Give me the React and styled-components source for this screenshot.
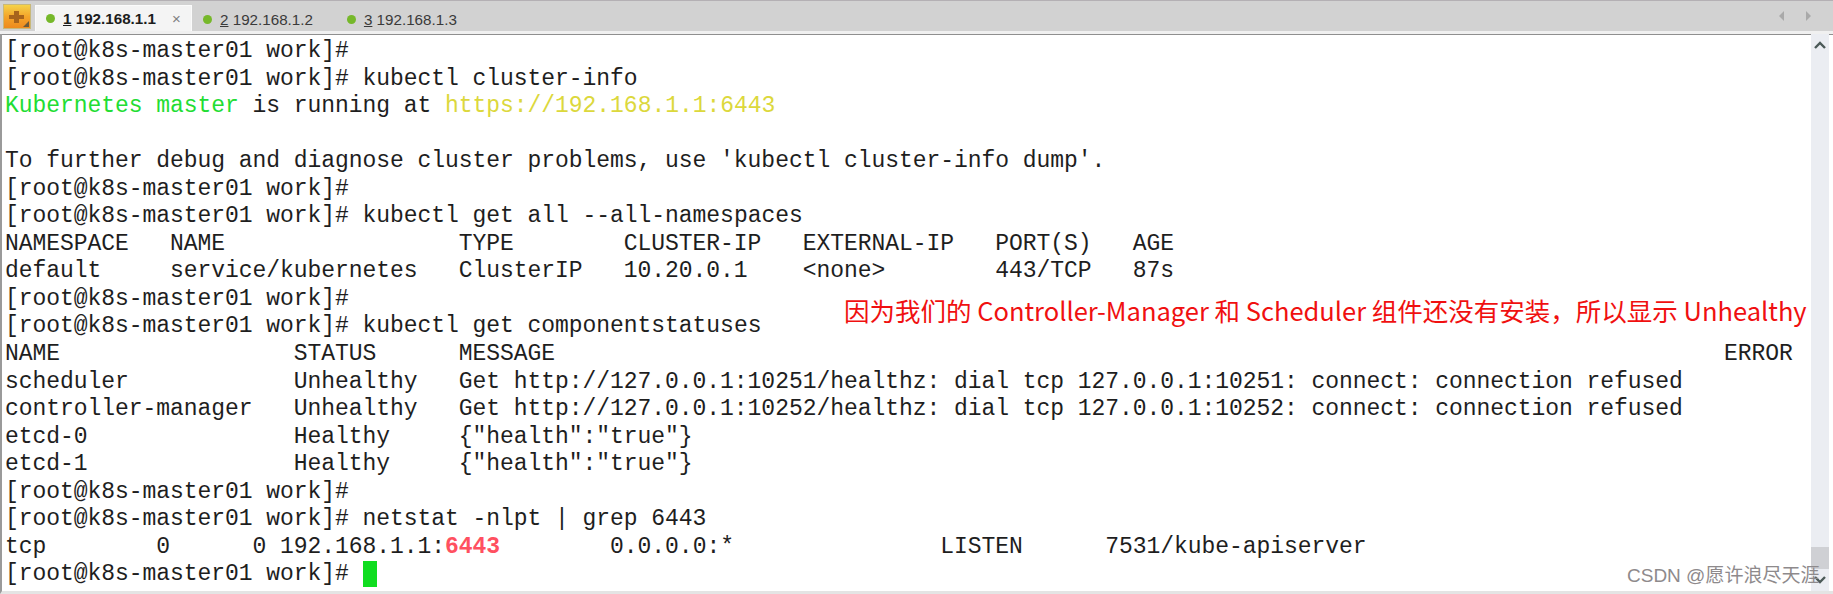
import styled, { createGlobalStyle } from 'styled-components';

const GlobalStyle = createGlobalStyle`
  html, body {
    margin: 0;
    padding: 0;
    background: #fff;
  }
`;

const tabs = [
	{num: '1', label: '192.168.1.1', active: true},
	{num: '2', label: '192.168.1.2'},
	{num: '3', label: '192.168.1.3'}
];

const PROMPT = '[root@k8s-master01 work]#';

const App = () => (
	<Window>
		<GlobalStyle/>
		<TabBar>
			<AddButton>
				<svg width="28" height="25" viewBox="0 0 28 25">
					<path d="M11 7h5v4h5v4h-5v4h-5v-4H6v-4h5z" fill="#a8641c"/>
					<path d="M20 23l6-6v6z" fill="#6b5a3a"/>
				</svg>
			</AddButton>
			{tabs.map(tab => (
				<Tab key={tab.num} $active={tab.active}>
					<Dot/>
					<TabLabel $active={tab.active}><u>{tab.num}</u> {tab.label}</TabLabel>
					{tab.active && <Close>×</Close>}
				</Tab>
			))}
			<Arrows>
				<svg width="40" height="12" viewBox="0 0 40 12">
					<path d="M5 1v10L0 6z" fill="#a9a9a9"/>
					<path d="M27 1v10l5-5z" fill="#a9a9a9"/>
				</svg>
			</Arrows>
		</TabBar>
		<Terminal>
			<Screen>
				<Line>{PROMPT}</Line>
				<Line>{PROMPT} kubectl cluster-info</Line>
				<Line><Green>Kubernetes master</Green> is running at <Yellow>https://192.168.1.1:6443</Yellow></Line>
				<Line> </Line>
				<Line>To further debug and diagnose cluster problems, use 'kubectl cluster-info dump'.</Line>
				<Line>{PROMPT}</Line>
				<Line>{PROMPT} kubectl get all --all-namespaces</Line>
				<Line>NAMESPACE   NAME                 TYPE        CLUSTER-IP   EXTERNAL-IP   PORT(S)   AGE</Line>
				<Line>default     service/kubernetes   ClusterIP   10.20.0.1    &lt;none&gt;        443/TCP   87s</Line>
				<Line>{PROMPT}</Line>
				<Line>{PROMPT} kubectl get componentstatuses</Line>
				<Line>{'NAME                 STATUS      MESSAGE'.padEnd(125)}ERROR</Line>
				<Line>scheduler            Unhealthy   Get http://127.0.0.1:10251/healthz: dial tcp 127.0.0.1:10251: connect: connection refused</Line>
				<Line>controller-manager   Unhealthy   Get http://127.0.0.1:10252/healthz: dial tcp 127.0.0.1:10252: connect: connection refused</Line>
				<Line>etcd-0               Healthy     {'{"health":"true"}'}</Line>
				<Line>etcd-1               Healthy     {'{"health":"true"}'}</Line>
				<Line>{PROMPT}</Line>
				<Line>{PROMPT} netstat -nlpt | grep 6443</Line>
				<Line>tcp        0      0 192.168.1.1:<Red>6443</Red>        0.0.0.0:*               LISTEN      7531/kube-apiserver</Line>
				<Line>{PROMPT} <Cursor/></Line>
			</Screen>
			<Scrollbar>
				<svg width="18" height="14" viewBox="0 0 18 14">
					<path d="M4 10l5-5 5 5" fill="none" stroke="#4c5a58" strokeWidth="2.4"/>
				</svg>
				<Thumb/>
				<svg width="18" height="14" viewBox="0 0 18 14">
					<path d="M4 4l5 5 5-5" fill="none" stroke="#4c5a58" strokeWidth="2.4"/>
				</svg>
			</Scrollbar>
			<Note>因为我们的 Controller-Manager 和 Scheduler 组件还没有安装，所以显示 Unhealthy</Note>
			<Watermark>CSDN @愿许浪尽天涯</Watermark>
		</Terminal>
	</Window>
);

export default App;

const Window = styled.div`
  width: 1833px;
  height: 594px;
  display: flex;
  flex-direction: column;
  overflow: hidden;
  background: #fff;
`;

const TabBar = styled.div`
  height: 30px;
  display: flex;
  align-items: flex-end;
  flex-shrink: 0;
  padding-left: 3px;
  background: #d2d2d2;
  border-top: 1px solid #b4b0b4;
  border-bottom: 3px solid #f0f0f0;
  box-shadow: 0 1px 0 #8f8f8f;
  font-family: "Liberation Sans", sans-serif;
`;

const AddButton = styled.div`
  width: 28px;
  height: 25px;
  margin-right: 4px;
  align-self: center;
  background: linear-gradient(#f5d24a, #f4a52a 50%, #ee8a1e);
  border: 1px solid #c8b87a;
  box-sizing: border-box;
  svg {
    display: block;
    margin: -1px;
  }
`;

const Tab = styled.div`
  height: ${({$active}) => ($active ? '26px' : '25px')};
  width: ${({$active}) => ($active ? '157px' : 'auto')};
  display: flex;
  align-items: center;
  box-sizing: border-box;
  padding-left: 10px;
  padding-right: ${({$active}) => ($active ? '0' : '22px')};
  background: ${({$active}) => ($active ? '#f4f4f4' : 'transparent')};
  border: 1px solid ${({$active}) => ($active ? '#fbfbfb' : 'transparent')};
  border-bottom: none;
`;

const Dot = styled.span`
  width: 9px;
  height: 9px;
  border-radius: 50%;
  background: #76b82a;
  margin-right: 8px;
  flex-shrink: 0;
`;

const TabLabel = styled.span`
  font-size: 15.2px;
  font-weight: ${({$active}) => ($active ? 700 : 400)};
  color: ${({$active}) => ($active ? '#1c1c1c' : '#3a3a3a')};
  white-space: pre;
`;

const Close = styled.span`
  margin-left: 16px;
  font-size: 15px;
  color: #808080;
`;

const Arrows = styled.div`
  margin-left: auto;
  margin-right: 14px;
  align-self: center;
  display: flex;
`;

const Terminal = styled.div`
  position: relative;
  flex: 1;
  display: flex;
  border-left: 2px solid #9a9a9a;
  border-bottom: 3px solid #e4e4e4;
  min-height: 0;
`;

const Screen = styled.div`
  flex: 1;
  padding: 4px 0 0 3px;
  font-family: "Liberation Mono", "DejaVu Sans Mono", monospace;
  font-size: 23px;
  letter-spacing: -0.05px;
  color: #1e1e1e;
`;

const Line = styled.div`
  height: 27.56px;
  line-height: 27.56px;
  white-space: pre;
`;

const Green = styled.span`
  color: #22dd33;
`;

const Yellow = styled.span`
  color: #dcd83c;
`;

const Red = styled.span`
  color: #ff5060;
  font-weight: 700;
`;

const Cursor = styled.span`
  display: inline-block;
  width: 14px;
  height: 26px;
  vertical-align: top;
  background: #10dd20;
`;

const Scrollbar = styled.div`
  width: 18px;
  margin-right: 4px;
  flex-shrink: 0;
  display: flex;
  flex-direction: column;
  align-items: center;
  background: #ebedf2;
  svg {
    margin: 4px 0;
    flex-shrink: 0;
  }
`;

const Thumb = styled.div`
  width: 18px;
  height: 22px;
  margin-top: auto;
  background: #cfd0d4;
`;

const Note = styled.div`
  position: absolute;
  left: 842px;
  top: 259px;
  font-family: "Noto Sans CJK SC", "Liberation Sans", sans-serif;
  font-size: 25.5px;
  line-height: 34px;
  color: #f01010;
  white-space: pre;
`;

const Watermark = styled.div`
  position: absolute;
  left: 1625px;
  bottom: 4px;
  font-family: "Liberation Sans", "Noto Sans CJK SC", sans-serif;
  font-size: 19px;
  color: #8e8a8c;
  white-space: pre;
`;
